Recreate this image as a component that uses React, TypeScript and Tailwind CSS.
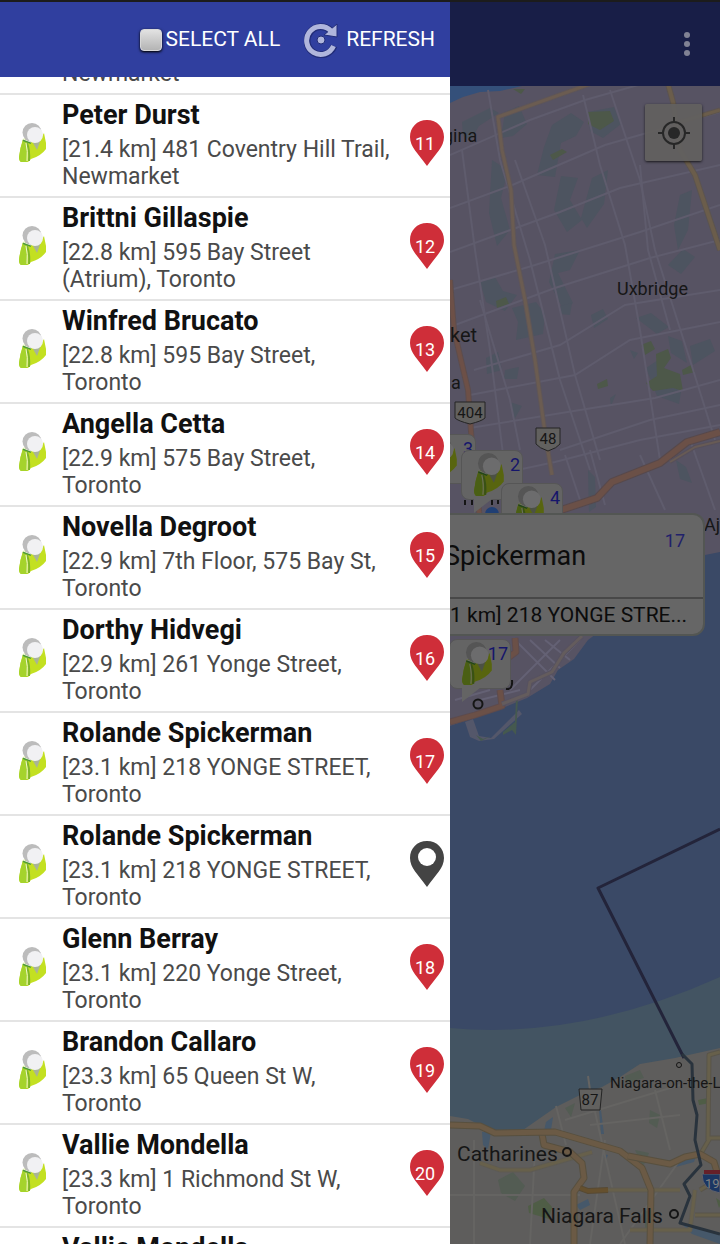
import { useState } from 'react';
import { clsx } from 'clsx';

interface Contact {
  name: string;
  address: string;
  pin: number | null;
}

const contacts: Contact[] = [
  { name: 'Peter Durst', address: '[21.4 km] 481 Coventry Hill Trail, Newmarket', pin: 11 },
  { name: 'Brittni Gillaspie', address: '[22.8 km] 595 Bay Street (Atrium), Toronto', pin: 12 },
  { name: 'Winfred Brucato', address: '[22.8 km] 595 Bay Street, Toronto', pin: 13 },
  { name: 'Angella Cetta', address: '[22.9 km] 575 Bay Street, Toronto', pin: 14 },
  { name: 'Novella Degroot', address: '[22.9 km] 7th Floor, 575 Bay St, Toronto', pin: 15 },
  { name: 'Dorthy Hidvegi', address: '[22.9 km] 261 Yonge Street, Toronto', pin: 16 },
  { name: 'Rolande Spickerman', address: '[23.1 km] 218 YONGE STREET, Toronto', pin: 17 },
  { name: 'Rolande Spickerman', address: '[23.1 km] 218 YONGE STREET, Toronto', pin: null },
  { name: 'Glenn Berray', address: '[23.1 km] 220 Yonge Street, Toronto', pin: 18 },
  { name: 'Brandon Callaro', address: '[23.3 km] 65 Queen St W, Toronto', pin: 19 },
  { name: 'Vallie Mondella', address: '[23.3 km] 1 Richmond St W, Toronto', pin: 20 },
];

function PersonIcon({ className }: { className?: string }) {
  return (
    <svg viewBox="0 0 28 40" className={className} aria-hidden="true">
      <path d="M4 16 L10 15 L18 22 L25 10 L27 20 L27 26 Q22 33 12 36 L9 39 L2 39 Q0 38 0 34 Q1 25 4 16 Z" fill="#c3e021" />
      <path d="M4 17 L7 18 Q9 28 8 39 L2 39 Q0 38 0 34 Q1 25 4 17 Z" fill="#a5d32c" />
      <path d="M8 20 Q11 28 10 38" fill="none" stroke="#7fb52c" strokeWidth="2" />
      <path d="M7 20 Q9 28 8 38" fill="none" stroke="#eef7d0" strokeWidth="1" />
      <path d="M4 17 L12 20" fill="none" stroke="#4f9a3a" strokeWidth="2" />
      <path d="M4 16 L12 19" fill="none" stroke="#f4fae0" strokeWidth="1" />
      <path d="M14 20 L22 16 L18 27 Z" fill="#a9b496" />
      <circle cx="13" cy="9.500" r="9.500" fill="#bcbcbc" />
      <circle cx="16" cy="12" r="8" fill="#f1f1f3" />
    </svg>
  );
}

function Pin({ value }: { value: number | null }) {
  return (
    <span className="relative block h-[46px] w-[34px] shrink-0">
      <svg viewBox="0 0 34 46" className="h-full w-full" aria-hidden="true">
        <path
          d="M17 0 C7 0 0 7.500 0 17 C0 27 8 33 17 46 C26 33 34 27 34 17 C34 7.500 27 0 17 0 Z"
          fill={value === null ? '#444444' : '#cf2e39'}
        />
        {value === null && <circle cx="17" cy="16" r="9" fill="#fff" />}
      </svg>
      {value !== null && (
        <span className="absolute inset-x-0 top-3 pr-1 text-center text-lg leading-6 text-white">{value}</span>
      )}
    </span>
  );
}

function ContactRow({ contact }: { contact: Contact }) {
  return (
    <li className="flex h-[103px] items-start border-b-2 border-[#e4e4e4] pl-[19px] pr-1.5">
      <PersonIcon className="mt-7 h-10 w-7 shrink-0" />
      <div className="ml-[15px] min-w-0 flex-1 pr-3 pt-1">
        <h2 className="text-[27px] font-bold leading-8 text-[#111]">{contact.name}</h2>
        <p className="pt-[5px] text-[23px] leading-[27px] text-[#4a4a4a]">{contact.address}</p>
      </div>
      <div className="mt-[25px]">
        <Pin value={contact.pin} />
      </div>
    </li>
  );
}

function RefreshIcon() {
  return (
    <svg viewBox="0 0 34 36" className="h-9 w-[34px]" aria-hidden="true">
      <path d="M30 24 A14 14 0 1 1 26 8" fill="none" stroke="#222d78" strokeWidth="7" />
      <path d="M33 2 L33 15 L20 13 Z" fill="#b0b6dc" stroke="#222d78" />
      <path d="M29.500 24 A14 14 0 1 1 27 9" fill="none" stroke="#b0b6dc" strokeWidth="5" />
      <circle cx="17" cy="18" r="4" fill="#b0b6dc" stroke="#222d78" />
    </svg>
  );
}

const localRoads = [
  'M450 155 L530 120 L585 100 L720 62',
  'M450 208 L510 186 L605 145 L720 112',
  'M450 252 L560 212 L620 188 L720 165',
  'M450 290 L535 265 L640 232 L720 205',
  'M455 325 L555 288 L650 258 L720 240',
  'M474 370 L560 345 L625 305 L720 290',
  'M470 395 L575 375 L630 340 L720 322',
  'M470 428 L580 410 L655 398 L720 380',
  'M560 450 L650 420 L720 405',
  'M470 480 L555 462 L640 440 L720 425',
  'M488 90 L500 160 L530 260 L560 380 L590 470',
  'M515 160 L545 245 L575 375 L600 460',
  'M583 95 L600 165 L625 245 L640 330 L660 460',
  'M610 90 L640 180 L655 250 L690 360 L715 440',
  'M462 150 L475 250 L490 350 L505 470',
  'M640 165 L648 250 L670 330',
  'M480 300 L510 400 L520 450',
  'M565 455 L580 500 M590 450 L605 505 M640 455 L665 510 M690 440 L715 510',
];

const woods = [
  'M462 122 l28 -14 9 5 -20 13 -8 14 -8 -4z',
  'M505 112 l14 -6 8 18 -14 12 -12 2z',
  'M552 125 l19 -12 13 9 -8 14 -15 7 -6 34 -18 -2 7 -28z',
  'M588 112 l26 -5 7 17 -18 14 -13 -7z',
  'M492 160 l16 10 -7 28 9 32 -13 16 -8 -33z',
  'M561 176 l17 2 -8 22 12 20 -15 12 -13 -22z',
  'M592 178 l16 -8 -4 34 -17 24 -6 -10z',
  'M680 195 l12 -5 -4 40 -10 20 -4 -25z',
  'M555 254 l25 -4 -10 20 -12 3 15 30 -9 8 -15 -29z',
  'M668 265 l15 -16 12 8 -14 17z',
  'M480 282 l15 -5 8 14 14 4 -12 16 -19 -9z',
  'M512 308 l24 -6 9 12 -2 20 -27 6 2 -18z',
  'M560 306 l12 -3 -2 12 -10 -1z',
  'M591 315 l12 -6 5 10 -14 9z',
  'M636 318 l15 -5 18 14 -12 7z',
  'M486 358 l12 -6 4 18 -15 4z M505 370 l14 -3 -2 12 -13 0z',
  'M668 336 l14 5 5 22 -16 -10z M690 346 l20 -7 5 12 -22 14z',
  'M646 368 l12 -8 10 14 14 12 -3 18 -22 -8z',
  'M588 470 l7 7 1 30 -7 5z M676 460 l10 7 6 16 -12 -4z',
  'M510 402 l12 4 -8 14z M610 398 l6 -4 -5 12z M630 350 l8 3 -4 6z',
];

const parks = [
  'M588 112 l22 -1 4 10 -14 9 -12 -6z',
  'M513 89 l12 0 -4 5z',
  'M550 155 l12 -6 5 3 -14 8z',
  'M496 301 l10 -4 3 7 -12 4z',
  'M641 345 l10 -4 4 8 -10 6z',
  'M656 354 l12 -5 3 9 -7 10 16 6 3 17 -10 -3 -20 3 -7 -8 11 -7z',
  'M682 370 l9 -5 4 7 -12 3z',
  'M597 384 l10 -5 1 7 -10 3z',
];

function Road({ d, color, edge, width }: { d: string; color: string; edge: string; width: number }) {
  return (
    <g fill="none" strokeLinejoin="round">
      <path d={d} stroke={edge} strokeWidth={width + 2} />
      <path d={d} stroke={color} strokeWidth={width} />
    </g>
  );
}

function MapCanvas() {
  return (
    <svg
      viewBox="450 86 270 1158"
      preserveAspectRatio="xMinYMin slice"
      className="absolute inset-0 h-full w-full"
      aria-label="Map"
    >
      <rect x="450" y="86" width="270" height="1158" fill="#575363" />
      <path d="M450 86 H522 L500 91 L480 92 L463 97 L450 103 Z" fill="#34507a" />
      <g fill="#4d5460">
        {woods.map((d) => (
          <path key={d} d={d} />
        ))}
      </g>
      <g fill="#4d5849">
        {parks.map((d) => (
          <path key={d} d={d} />
        ))}
      </g>
      <g fill="none" stroke="#5f5c6d" strokeWidth="2">
        {localRoads.map((d) => (
          <path key={d} d={d} />
        ))}
      </g>

      <Road d="M590 84 L498 117 L502 150 L511 190 L514 245 L525 300 L535 360 L546 440 L552 475" color="#6b5c51" edge="#5f5658" width={3} />
      <Road d="M668 84 L673 102 L680 150 L695 175 L720 250" color="#6b5d4b" edge="#5c5450" width={4} />
      <Road d="M680 122 L720 110" color="#6b5d4b" edge="#5c5450" width={3} />
      <Road d="M450 280 L454 330 L468 390 L472 445 L480 520" color="#6d5047" edge="#5d4d4d" width={4} />
      <Road d="M555 512 L597 498 L612 482 L660 463 L687 442 L720 432" color="#6b5047" edge="#57494c" width={6} />
      <Road d="M670 462 L695 447 L720 441" color="#685b55" edge="#57505a" width={2} />

      {/* lake and shoreline */}
      <path
        d="M450 726 L470 719 L500 709 L527 698 L550 684 L558 670 L574 659 L588 640 L700 556 L720 552 V1048 L600 1130 H450 Z"
        fill="#3a4966"
      />
      <path d="M450 1028 Q580 1040 720 977 V1260 H450 Z" fill="#435462" />
      <path d="M465 722 l8 -3 6 17 12 2 28 -28 3 4 -28 25 -15 2 -9 -4z" fill="#54576a" />
      <path d="M476 735 l7 4 8 -3 -10 5z M503 732 l12 -10 1 -24 2 0 -2 37 -4 -5 -9 5z" fill="#45594f" />
      <g stroke="#646174" strokeWidth="2">
        <path d="M515 640 L555 680 M530 640 L560 668 M545 640 L570 660 M510 690 L560 640 M525 695 L580 640 M455 700 L490 690 M480 700 L520 690" />
      </g>
      <Road d="M515 638 L516 652 L505 660 M450 722 L475 715 L502 706 L500 690" color="#6b5047" edge="#5d4b4d" width={5} />
      <Road d="M502 704 L528 694 L530 682 L552 672 L564 653 L582 636" color="#645c5d" edge="#575260" width={3} />

      {/* southern shore */}
      <path
        d="M450 1116 L468 1119 L490 1130 L523 1130 L556 1107 L580 1095 L602 1087 L620 1077 L640 1064 L675 1058 L720 1048 V1244 H450 Z"
        fill="#5e5d5c"
      />
      <g fill="#535c53">
        <path d="M498 1180 l15 -8 12 14 -10 15 -14 -8z M625 1076 l15 -6 4 8 -18 5z M565 1108 l10 -5 -4 14z" />
        <path d="M650 1110 l10 5 -3 13 -8 -5z M635 1150 l14 3 -6 14z M645 1210 l8 6 -8 16z" />
      </g>
      <path d="M528 1206 l16 -8 8 9 -3 12 -20 -6z M698 1100 l10 -2 2 5 -11 2z M716 1198 l6 4 -3 6z" fill="#4f5d46" />
      <g fill="#46586a">
        <path d="M546 1122 l7 -5 -2 13 -7 1z M482 1132 l9 0 -3 17 -5 -4z M599 1110 l2 0 3 24 -3 0z" />
        <path d="M576 1205 l12 -6 2 6 -10 5z M674 1164 l22 -8 -2 6 -18 5z M602 1154 l6 1 -2 5z M682 1224 l38 11 v9 l-28 -10z" />
      </g>
      <g fill="none" stroke="#656462" strokeWidth="2">
        <path d="M588 1076 L590 1090 L625 1244 M474 1140 V1244 M556 1106 L566 1145 M450 1195 H580 M565 1120 L680 1085" />
        <path d="M535 1150 L530 1244 M590 1125 L680 1115 M655 1090 L670 1150 M605 1140 L590 1244 M680 1160 L620 1244" />
      </g>
      <Road d="M480 1163 L500 1170 L530 1170 L575 1157 L592 1152 M608 1190 H680 M630 1230 H690 L695 1190" color="#67604b" edge="#5e5b53" width={3} />
      <Road d="M708 1140 L709 1055 L720 1052 M720 1138 H710 L700 1155 M700 1190 L720 1178 M695 1215 H720" color="#67604b" edge="#59554a" width={3} />
      <Road d="M542 1134 L544 1145 L570 1152 L582 1163 L584 1178 L574 1192 L574 1244" color="#6b5a45" edge="#58503f" width={5} />
      <Road d="M580 1188 L588 1191 L608 1190" color="#65502e" edge="#574a34" width={4} />
      <Road d="M450 1125 L480 1126 L495 1133 L555 1132 L620 1151 L642 1168 L651 1190 L650 1244" color="#6b5a45" edge="#58503f" width={5} />
      <Road d="M628 1156 L670 1164 L685 1157 L700 1154 L714 1162 L717 1172" color="#6b5a45" edge="#58503f" width={5} />

      <g fill="none" strokeWidth="3" strokeLinejoin="round">
        <path d="M720 829 L598 888 L684 1058" stroke="#23243a" />
        <path
          d="M682 1054 L692 1064 L693 1100 L697 1115 L695 1140 L701 1165 L684 1184 L690 1196 L680 1223 L720 1234"
          stroke="#29333d"
        />
      </g>

      <g fill="none" stroke="#151515" strokeWidth="2">
        <circle cx="478" cy="704" r="4.500" />
        <circle cx="567" cy="1152" r="4" />
        <circle cx="674" cy="1214" r="4" />
        <circle cx="679" cy="1065" r="2.500" strokeWidth="1" />
        <path d="M506 689 Q513 690 512 680" />
        <path d="M465 500 v5 M472 500 v5 M479 501 v4 M492 500 v5 M498 500 v4" />
      </g>
      <circle cx="492" cy="514" r="7" fill="#203f74" />

      {/* road shields */}
      <g fill="#62615f" stroke="#242424" strokeWidth="1">
        <path d="M455 402 H485 V418 Q482 421 470 424 Q458 421 455 418 Z" />
        <path d="M536 428 H560 V444 Q557 448 548 451 Q539 448 536 444 Z" />
        <path d="M579 1089 H602 L600 1110 H581 Z" />
      </g>
      <path d="M702 1174 H720 V1193 Q702 1190 702 1174 Z" fill="#1b3663" stroke="#63626a" />
      <path d="M704 1170 H720 V1174 H704 Z" fill="#662029" />

      <g fill="#161616" fontSize="15" textAnchor="middle">
        <text x="470" y="418">404</text>
        <text x="548" y="444">48</text>
        <text x="590" y="1105">87</text>
      </g>
      <text x="705" y="1188" fill="#808080" fontSize="13">19</text>

      <g fill="#161616" fontSize="18">
        <text x="443" y="142">gina</text>
        <text x="450" y="342" fontSize="20">ket</text>
        <text x="451" y="389">a</text>
        <text x="617" y="295">Uxbridge</text>
        <text x="704" y="531">Aja</text>
        <text x="610" y="1088" fontSize="15">Niagara-on-the-L</text>
        <text x="457" y="1161" fontSize="21">Catharines</text>
        <text x="541" y="1223" fontSize="21">Niagara Falls</text>
      </g>
    </svg>
  );
}

function Marker({ value, className }: { value: number; className: string }) {
  return (
    <div className={clsx('absolute h-[50px] w-[62px] rounded-lg border border-[#565656] bg-[#646464]', className)}>
      <svg viewBox="0 0 18 14" className="absolute left-3 top-12 h-3.5 w-[18px]" aria-hidden="true">
        <path d="M0 0 H18 L0 14 Z" fill="#646464" />
      </svg>
      <PersonIcon className="absolute left-3 top-0.5 h-11 w-[31px] brightness-45" />
      <span className="absolute right-0.5 top-0.5 text-lg leading-6 text-[#15156b]">{value}</span>
    </div>
  );
}

function MapPane() {
  return (
    <main className="flex min-w-0 flex-1 flex-col">
      <header className="flex h-[84px] shrink-0 items-center justify-end bg-[#181e47] pr-[23px]">
        <button type="button" aria-label="More options" className="flex w-5 justify-center">
          <svg viewBox="0 0 6 24" className="h-6 w-1.5" fill="#808294">
            <circle cx="3" cy="3" r="3" />
            <circle cx="3" cy="12" r="3" />
            <circle cx="3" cy="21" r="3" />
          </svg>
        </button>
      </header>
      <div className="relative flex-1 overflow-hidden">
        <MapCanvas />
        <button
          type="button"
          aria-label="My location"
          className="absolute right-[18px] top-[18px] flex size-[57px] items-center justify-center rounded-xs bg-[#62605f]/95 shadow-sm shadow-black/60"
        >
          <svg viewBox="0 0 32 32" className="size-8" fill="none" stroke="#272727" strokeWidth="2">
            <circle cx="16" cy="16" r="11" />
            <circle cx="16" cy="16" r="6" fill="#272727" stroke="none" />
            <path d="M16 0 V5 M16 27 V32 M0 16 H5 M27 16 H32" />
          </svg>
        </button>

        <Marker value={3} className="-left-9 top-[348px]" />
        <Marker value={2} className="left-[11px] top-[364px]" />
        <Marker value={4} className="left-[51px] top-[397px]" />
        <Marker value={17} className="-left-px top-[553px]" />

        <section className="absolute -left-4 right-[15px] top-[427px] rounded-xl border-2 border-[#535653] bg-[#666]">
          <div className="flex h-[84px] items-start justify-between border-b-2 border-[#484848] pl-2 pr-[18px]">
            <h3 className="pt-[25px] text-[27px] leading-8 text-[#0c0c0c]">Spickerman</h3>
            <span className="pt-3 text-lg leading-7 text-[#21216b]">17</span>
          </div>
          <p className="h-[35px] pl-3.5 text-[21px] leading-8 text-[#0c0c0c]">1 km] 218 YONGE STRE...</p>
        </section>
      </div>
    </main>
  );
}

export default function App() {
  const [allSelected, setAllSelected] = useState(false);

  return (
    <div className="flex h-screen flex-col overflow-hidden bg-white font-[Roboto,sans-serif]">
      <div className="flex h-0.5 shrink-0 bg-[#1c1c1c]" />
      <div className="flex min-h-0 flex-1">
        <aside className="flex w-5/8 shrink-0 flex-col bg-white">
          <header className="flex h-[75px] shrink-0 items-center justify-end gap-6 bg-[#303f9f] pr-[15px] text-[21px] text-white">
            <label className="flex items-center gap-1">
              <input
                type="checkbox"
                checked={allSelected}
                onChange={(e) => setAllSelected(e.target.checked)}
                className="size-[22px] appearance-none rounded-sm border border-[#d8d8d8] bg-linear-to-b from-[#e2e2e2] to-[#b4b4b4] shadow-sm shadow-black checked:bg-[#7986cb]"
              />
              SELECT ALL
            </label>
            <button type="button" className="flex items-center gap-2">
              <RefreshIcon />
              REFRESH
            </button>
          </header>
          <ul className="min-h-0 flex-1 overflow-hidden">
            <li className="flex h-[18px] items-end overflow-hidden border-b-2 border-[#e4e4e4] pb-1.5 pl-[62px] text-[23px] leading-[27px] text-[#4a4a4a]">
              Newmarket
            </li>
            {contacts.map((contact, i) => (
              <ContactRow key={i} contact={contact} />
            ))}
            <li className="pl-[62px] pt-1 text-[27px] font-bold leading-8 text-[#111]">Vallie Mondella</li>
          </ul>
        </aside>
        <MapPane />
      </div>
    </div>
  );
}
